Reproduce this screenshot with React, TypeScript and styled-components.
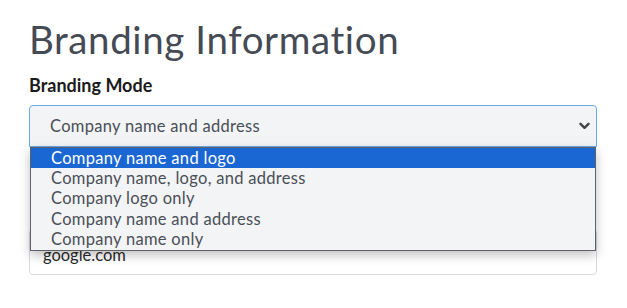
import React, { useState } from 'react';
import styled, { createGlobalStyle } from 'styled-components';

const GlobalStyle = createGlobalStyle`
  html, body {
    margin: 0;
    padding: 0;
    background: #fff;
    font-family: Lato, "Open Sans", sans-serif;
  }
`;

const OPTIONS = [
  'Company name and logo',
  'Company name, logo, and address',
  'Company logo only',
  'Company name and address',
  'Company name only',
];

const Page = styled.div`
  box-sizing: border-box;
  min-height: 308px;
  padding: 14px 30px 0 29px;
  width: 627px;
`;

const Title = styled.h1`
  margin: 0;
  font-size: 38.5px;
  font-weight: 400;
  color: #454b55;
  letter-spacing: 0.6px;
  line-height: 50px;
`;

const Field = styled.div<{ $gap?: number }>`
  display: flex;
  flex-direction: column;
  margin-top: ${p => p.$gap ?? 10}px;
  position: relative;
`;

const Label = styled.label`
  font-size: 18px;
  font-weight: 700;
  color: #1b1b1b;
  line-height: 22px;
  margin-bottom: 9px;
`;

const SelectWrap = styled.div`
  position: relative;
  z-index: 3;
`;

const SelectBox = styled.div<{ $open: boolean }>`
  height: 42px;
  box-sizing: border-box;
  display: flex;
  align-items: center;
  justify-content: space-between;
  padding: 0 6px 0 20px;
  background: #f3f4f6;
  border: 1px solid ${p => (p.$open ? '#6aa9ec' : '#d7d9dd')};
  border-radius: 4px 4px 0 0;
  font-size: 16.5px;
  letter-spacing: 0.3px;
  color: #4a4f57;
  cursor: pointer;
`;

const Menu = styled.ul`
  position: absolute;
  top: 100%;
  left: 1px;
  right: 1px;
  margin: 0;
  padding: 0 0 1px;
  list-style: none;
  background: #f3f4f6;
  border: 1px solid #5f6166;
  box-shadow: 0 4px 10px rgba(0, 0, 0, 0.25);
`;

const Option = styled.li<{ $active: boolean }>`
  height: 20.2px;
  line-height: 20px;
  padding-left: 20px;
  font-size: 16.5px;
  letter-spacing: 0.3px;
  background: ${p => (p.$active ? '#1a66d3' : 'transparent')};
  color: ${p => (p.$active ? '#fff' : '#4a4f57')};
`;

const Input = styled.input`
  box-sizing: border-box;
  height: 46px;
  border: 1px solid #d7d9dd;
  border-radius: 4px;
  padding: 6px 13px 0;
  font-family: inherit;
  font-size: 16.5px;
  color: #2b2b2b;
  background: #fff;
  outline: none;
`;

const Chevron = () => (
  <svg width="11" height="8" viewBox="0 0 11 8" fill="none">
    <path d="M1.5 1.8 L5.5 5.8 L9.5 1.8" stroke="#444" strokeWidth="2.4" strokeLinecap="round" strokeLinejoin="round" />
  </svg>
);

export default function App() {
  const [value] = useState('Company name and address');
  const [active, setActive] = useState(0);

  return (
    <Page>
      <GlobalStyle />
      <Title>Branding Information</Title>
      <Field>
        <Label>Branding Mode</Label>
        <SelectWrap>
          <SelectBox $open>
            <span>{value}</span>
            <Chevron />
          </SelectBox>
          <Menu>
            {OPTIONS.map((o, i) => (
              <Option key={o} $active={i === active} onMouseEnter={() => setActive(i)}>
                {o}
              </Option>
            ))}
          </Menu>
        </SelectWrap>
      </Field>
      <Field $gap={82}>
        <Input aria-label="Website" defaultValue="google.com" />
      </Field>
    </Page>
  );
}
